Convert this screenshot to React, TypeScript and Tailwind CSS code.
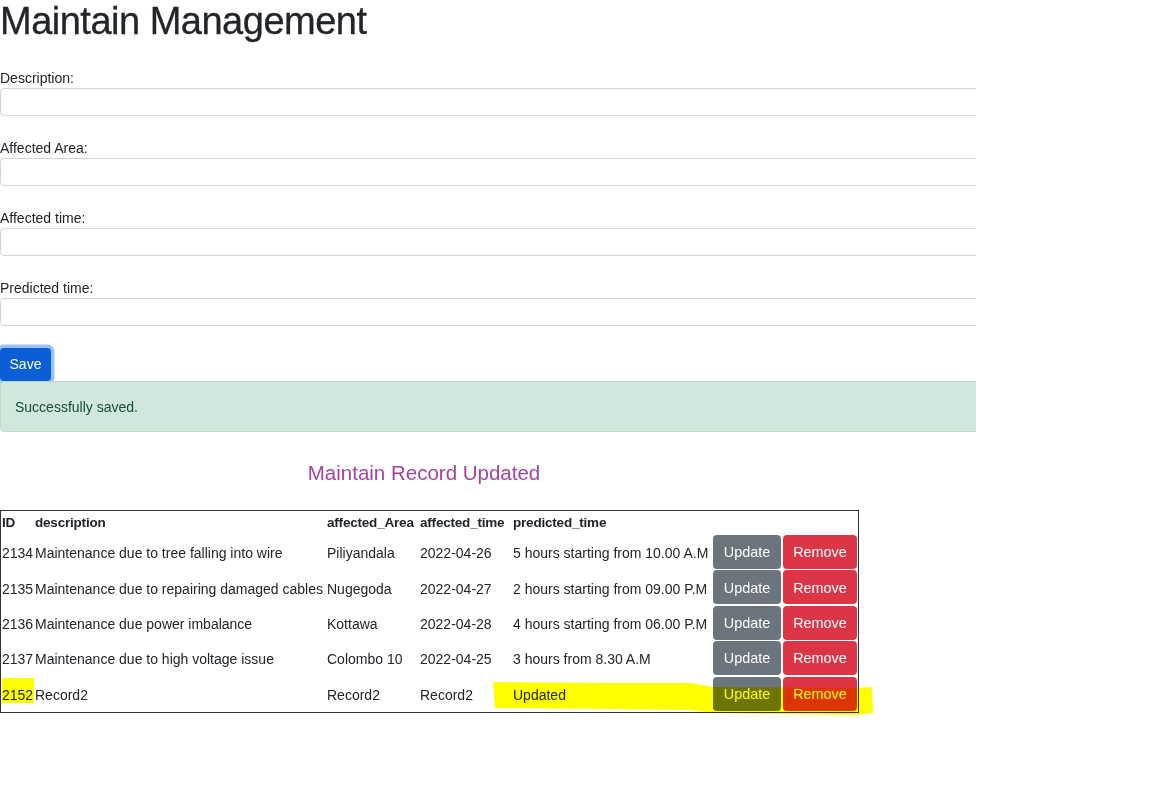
import React from "react";

const rows = [
  ["2134", "Maintenance due to tree falling into wire", "Piliyandala", "2022-04-26", "5 hours starting from 10.00 A.M"],
  ["2135", "Maintenance due to repairing damaged cables", "Nugegoda", "2022-04-27", "2 hours starting from 09.00 P.M"],
  ["2136", "Maintenance due power imbalance", "Kottawa", "2022-04-28", "4 hours starting from 06.00 P.M"],
  ["2137", "Maintenance due to high voltage issue", "Colombo 10", "2022-04-25", "3 hours from 8.30 A.M"],
  ["2152", "Record2", "Record2", "Record2", "Updated"],
];

const fields = ["Description:", "Affected Area:", "Affected time:", "Predicted time:"];

export default function App() {
  return (
    <div
      className="w-[1152px] h-[786px] bg-white text-[#212529] overflow-hidden"
      style={{ fontFamily: '"Liberation Sans", Arial, sans-serif' }}
    >
      <div className="w-[976px] overflow-hidden">
        <h1 className="m-0 text-[38px] leading-[42px] tracking-[-0.5px] font-normal mb-[26px] [-webkit-text-stroke:0.3px_#212529]">
          Maintain Management
        </h1>
        {fields.map((f) => (
          <div key={f} className="mb-[22px]">
            <div className="text-[14px] leading-[20px] h-[20px]">{f}</div>
            <div className="w-[1000px] h-[28px] border border-[#ced4da] rounded-[4px] bg-white" />
          </div>
        ))}
        <div className="h-[33px]">
          <button className="h-[33px] w-[51px] bg-[#0b5ed7] text-white text-[14px] rounded-[4px] shadow-[0_0_0_3.5px_rgba(49,132,253,0.5)]">
            Save
          </button>
        </div>
        <div className="relative w-[1000px] h-[51px] bg-[#d1e7dd] border border-[#badbcc] rounded-[4px] text-[#0f5132] text-[14px] flex items-center px-[14px] pt-[1px]">
          Successfully saved.
        </div>
      </div>

      <div className="w-[848px] text-center text-[20.5px] leading-[24px] text-[#a443a4] mt-[29px] mb-[25px]">
        Maintain Record Updated
      </div>

      <div className="relative w-[859px]">
        <div className="border border-[#333333] grid grid-cols-[33px_292px_93px_93px_200px_70px_76px] grid-rows-[24px_35.4px_35.4px_35.4px_35.4px_35.4px] text-[14px]">
          {["ID", "description", "affected_Area", "affected_time", "predicted_time", "", ""].map((h, i) => (
            <div key={i} className="font-bold text-[13.5px] tracking-[-0.2px] flex items-center pl-[1px] pt-[1px] whitespace-nowrap">
              {h}
            </div>
          ))}
          {rows.map((r) => (
            <React.Fragment key={r[0]}>
              {r.map((c, i) => (
                <div key={i} className="flex items-center pl-[1px] pt-[2px] whitespace-nowrap">
                  {c}
                </div>
              ))}
              <div className="pl-[1px]">
                <div className="h-[34px] w-[68px] bg-[#6c757d] text-white text-[14.4px] rounded-[4px] flex items-center justify-center pt-[2px]">
                  Update
                </div>
              </div>
              <div className="pl-[1px]">
                <div className="h-[34px] w-[74px] bg-[#dc3545] text-white text-[14.4px] rounded-[4px] flex items-center justify-center pt-[2px]">
                  Remove
                </div>
              </div>
            </React.Fragment>
          ))}
        </div>
        <div className="absolute left-[2px] top-[168px] w-[32px] h-[25px] bg-[#ffff00] mix-blend-multiply" />
        <svg
          className="absolute left-[490px] top-[168px] mix-blend-multiply"
          width="385"
          height="40"
          viewBox="0 0 385 40"
        >
          <polygon
            points="3,4 120,5 200,5 223,9 368,10 382,9 383,35 368,37 223,35 200,32 120,31 5,30"
            fill="#ffff00"
          />
        </svg>
      </div>
    </div>
  );
}
